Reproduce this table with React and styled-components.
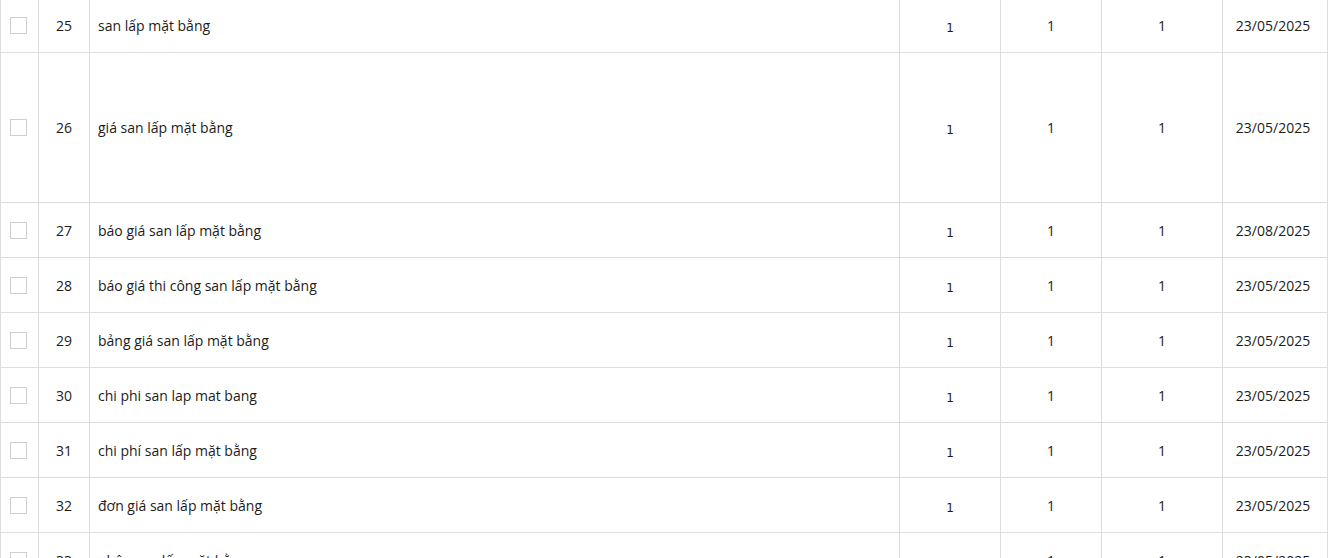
import React from "react";
import styled, { createGlobalStyle } from "styled-components";

const GlobalStyle = createGlobalStyle`
  html, body {
    margin: 0;
    padding: 0;
    background: #ffffff;
    overflow: hidden;
  }
  body {
    font-family: "Open Sans", "Noto Sans", sans-serif;
    color: #1c1c1c;
  }
`;

const rows = [
  { id: 25, keyword: "san lấp mặt bằng", date: "23/05/2025" },
  { id: 26, keyword: "giá san lấp mặt bằng", date: "23/05/2025", tall: true },
  { id: 27, keyword: "báo giá san lấp mặt bằng", date: "23/08/2025" },
  { id: 28, keyword: "báo giá thi công san lấp mặt bằng", date: "23/05/2025" },
  { id: 29, keyword: "bảng giá san lấp mặt bằng", date: "23/05/2025" },
  { id: 30, keyword: "chi phi san lap mat bang", date: "23/05/2025" },
  { id: 31, keyword: "chi phí san lấp mặt bằng", date: "23/05/2025" },
  { id: 32, keyword: "đơn giá san lấp mặt bằng", date: "23/05/2025" },
  { id: 33, keyword: "nhận san lấp mặt bằng", date: "23/05/2025" },
];

const widths = [38, 51, 810, 101, 101, 121, 105];

const Wrapper = styled.div`
  margin-top: -3px;
`;

const Table = styled.table`
  width: 1327px;
  border-collapse: collapse;
  table-layout: fixed;
  font-size: 14px;
`;

const Col = styled.col`
  width: ${(props) => props.$w}px;
`;

const Row = styled.tr`
  height: ${(props) => (props.$tall ? "150px" : "55px")};
`;

const Cell = styled.td`
  border: 1px solid #dddddd;
  padding: 0 8px;
  vertical-align: middle;
  text-align: ${(props) => props.$align || "center"};
  white-space: nowrap;
  overflow: hidden;
`;

const DateCell = styled(Cell)`
  padding: 0 12px 0 8px;
`;

const Checkbox = styled.span`
  display: block;
  width: 15px;
  height: 15px;
  border: 1px solid #cfcfcf;
  background: #ffffff;
  margin: 0 auto 0 1px;
`;

const Clicks = styled.span`
  font-family: "DejaVu Sans", sans-serif;
  font-size: 12px;
  position: relative;
  top: 1px;
  color: #1a1a1a;
`;

export default function App() {
  return (
    <>
      <GlobalStyle />
      <Wrapper>
        <Table>
          <colgroup>
            {widths.map((w, i) => (
              <Col key={i} $w={w} />
            ))}
          </colgroup>
          <tbody>
            {rows.map((row) => (
              <Row key={row.id} $tall={row.tall}>
                <Cell>
                  <Checkbox />
                </Cell>
                <Cell>{row.id}</Cell>
                <Cell $align="left">{row.keyword}</Cell>
                <Cell>
                  <Clicks>1</Clicks>
                </Cell>
                <Cell>1</Cell>
                <Cell>1</Cell>
                <DateCell>{row.date}</DateCell>
              </Row>
            ))}
          </tbody>
        </Table>
      </Wrapper>
    </>
  );
}
